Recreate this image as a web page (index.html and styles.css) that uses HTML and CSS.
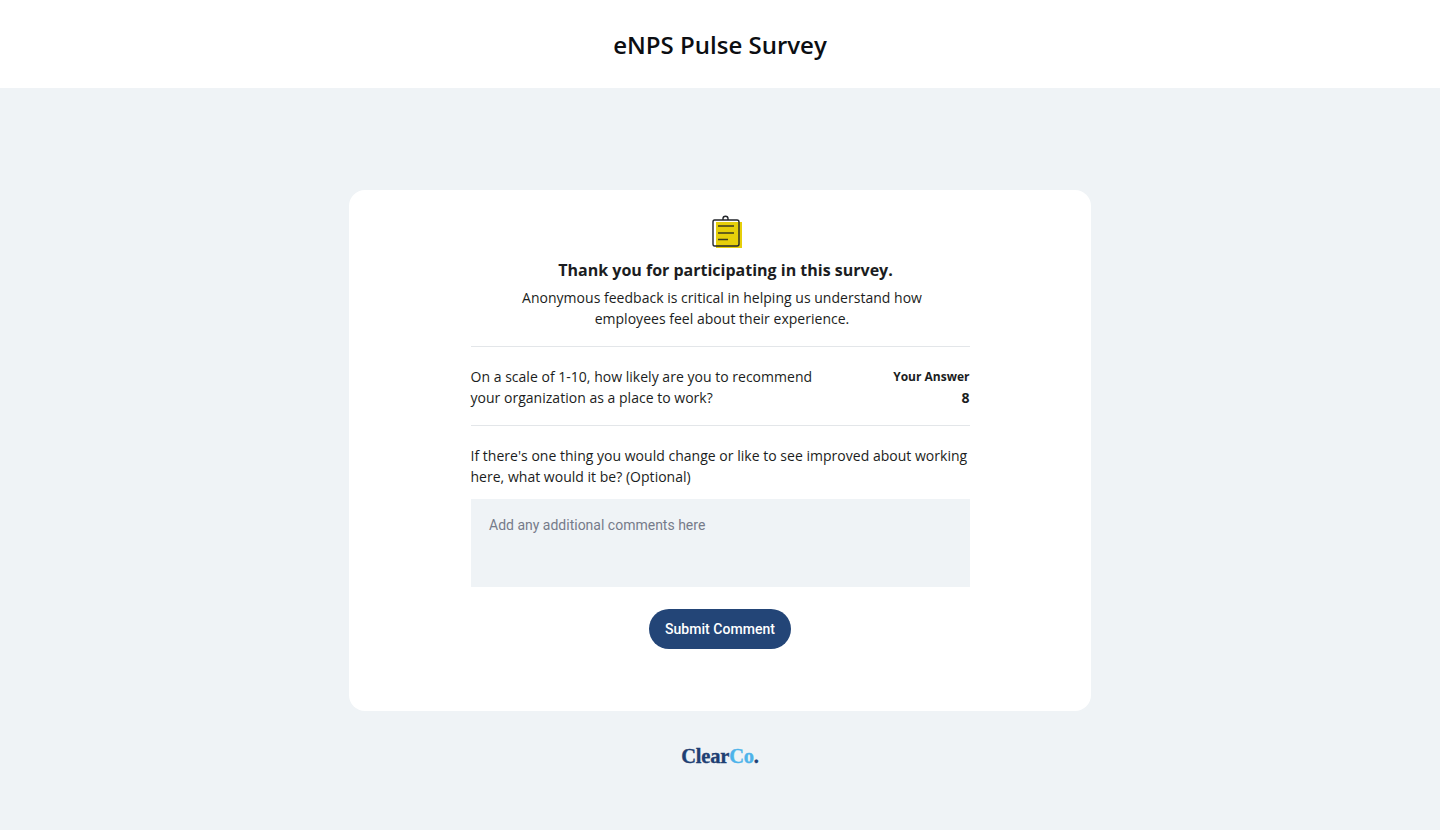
FILE: index.html
```html
<!DOCTYPE html>
<html lang="en">
<head>
<meta charset="utf-8">
<title>eNPS Pulse Survey</title>
<link rel="stylesheet" href="styles.css">
</head>
<body>
<header class="topbar"><h1>eNPS Pulse Survey</h1></header>
<main class="page">
  <section class="card">
    <div class="inner">
      <svg class="icon" width="32" height="34" viewBox="0 0 32 34" aria-hidden="true">
        <rect x="4" y="7" width="26" height="26" fill="#e6cf0a"/>
        <path d="M2.500 5H25Q27 5 27 7V29Q27 31 25 31H2.500Q1 31 1 29V7Q1 5 2.500 5Z" fill="none" stroke="#23262b" stroke-width="1.400"/>
        <path d="M11 5V3.500Q11 1.200 13.500 1.200Q16 1.200 16 3.500V5" fill="none" stroke="#23262b" stroke-width="1.400"/>
        <path d="M6 11H22M6 18H22M6 24.500H16" stroke="#3a3a20" stroke-width="1.500"/>
      </svg>
      <h2 class="title">Thank you for participating in this survey.</h2>
      <p class="intro">Anonymous feedback is critical in helping us understand how<br>employees feel about their experience.</p>
      <div class="answer-row">
        <p class="question">On a scale of 1-10, how likely are you to recommend<br>your organization as a place to work?</p>
        <div class="answer">
          <div class="answer-label">Your Answer</div>
          <div class="answer-value">8</div>
        </div>
      </div>
      <p class="question followup">If there's one thing you would change or like to see improved about working here, what would it be? (Optional)</p>
      <textarea class="comment" placeholder="Add any additional comments here"></textarea>
      <button class="submit" type="button">Submit Comment</button>
    </div>
  </section>
  <div class="logo">Clear<span class="logo-co">Co</span>.</div>
</main>
</body>
</html>
```
FILE: styles.css
```css
* { box-sizing: border-box; }
html, body { margin: 0; height: 100%; }
body {
  background: #eff3f6;
  color: #1b1d21;
  font-family: "Open Sans", sans-serif;
  display: flex;
  flex-direction: column;
  min-height: 830px;
}
.topbar {
  height: 88px;
  background: #fff;
  display: flex;
  align-items: center;
  justify-content: center;
  flex: none;
}
.topbar h1 {
  margin: 0;
  font-size: 24px;
  font-weight: 600;
  line-height: 32px;
  color: #0c0e12;
  position: relative;
  top: 1px;
}
.page {
  flex: 1;
  display: flex;
  flex-direction: column;
  align-items: center;
  padding-top: 102px;
}
.card {
  width: 742px;
  height: 521px;
  background: #fff;
  border-radius: 16px;
  padding-top: 25px;
  display: flex;
  justify-content: center;
}
.inner {
  width: 499px;
  display: flex;
  flex-direction: column;
  align-items: center;
}
.icon { display: block; flex: none; margin-left: 16px; }
.title {
  margin: 9px 0 0;
  padding-left: 11px;
  font-size: 16px;
  line-height: 24px;
  font-weight: 700;
  text-align: center;
}
.intro {
  margin: 5px 0 0;
  font-size: 14px;
  line-height: 21px;
  text-align: center;
  padding: 0 0 17px 4px;
  width: 100%;
  letter-spacing: 0.02px;
  border-bottom: 1px solid #e3e6e9;
}
.answer-row {
  width: 100%;
  display: flex;
  justify-content: space-between;
  padding: 19px 0 17px;
  border-bottom: 1px solid #e3e6e9;
}
.question {
  margin: 0;
  font-size: 14px;
  line-height: 21px;
  letter-spacing: 0.02px;
}
.answer { text-align: right; }
.answer-label {
  font-size: 12px;
  line-height: 21px;
  font-weight: 700;
}
.answer-value {
  font-size: 14px;
  line-height: 21px;
  font-weight: 700;
}
.followup { width: 100%; margin-top: 19px; }
.comment {
  display: block;
  width: 100%;
  height: 88px;
  margin-top: 12px;
  padding: 18px 18px 18px 18.5px;
  border: 0;
  border-radius: 0;
  resize: none;
  outline: 0;
  background: #eff3f6;
  font-family: Roboto, sans-serif;
  font-size: 14px;
  line-height: 16px;
}
.comment::placeholder { color: #767b8a; opacity: 1; }
.submit {
  width: 142px;
  height: 40px;
  margin-top: 22px;
  border: 0;
  border-radius: 20px;
  background: #234577;
  color: #fff;
  font-family: Roboto, sans-serif;
  font-size: 14px;
  font-weight: 500;
  letter-spacing: 0.03px;
}
.logo {
  margin-top: 32px;
  font-family: "Liberation Serif", serif;
  font-weight: 700;
  font-size: 20.5px;
  line-height: 26px;
  letter-spacing: -0.2px;
  color: #1f3f73;
  -webkit-text-stroke: 0.35px currentColor;
}
.logo-co { color: #4eb3ea; }
```
